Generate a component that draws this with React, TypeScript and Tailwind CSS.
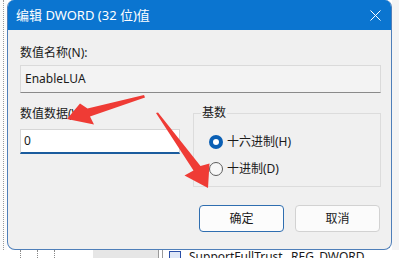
import React from 'react'

const FONT = { fontFamily: '"Noto Sans", "Noto Sans CJK SC", sans-serif' }

function CloseIcon() {
  return (
    <svg width="11" height="11" viewBox="0 0 11 11" className="block">
      <path d="M0.5 0.5 L10.5 10.5 M10.5 0.5 L0.5 10.5" stroke="#ffffff" strokeWidth="1" fill="none" />
    </svg>
  )
}

function Radio({ checked, label }: { checked?: boolean; label: string }) {
  return (
    <div className="flex items-center gap-[4px] h-[16px]">
      {checked ? (
        <span className="flex h-[14px] w-[14px] items-center justify-center rounded-full bg-[#0a5fb4]">
          <span className="h-[6px] w-[6px] rounded-full bg-white" />
        </span>
      ) : (
        <span className="h-[14px] w-[14px] rounded-full border border-[#5c5c5c] bg-[#f7f7f7]" />
      )}
      <span className="text-[12px] leading-[16px] text-[#1a1a1a]">{label}</span>
    </div>
  )
}

function Arrows() {
  return (
    <svg
      width="399"
      height="258"
      viewBox="0 0 399 258"
      className="pointer-events-none absolute left-0 top-0"
    >
      <polygon
        points="144,95 145,97.5 90,116.5 94,124.5 67,119 80,103.5 87.5,108.5"
        fill="#ef3b35"
      />
      <polygon
        points="156,113 158,112.5 200.5,166 209.5,163.5 208,188 184.5,175.5 193.5,170.5"
        fill="#ef3b35"
      />
    </svg>
  )
}

export default function App() {
  return (
    <div className="relative h-[258px] w-[399px] overflow-hidden bg-white text-[#1a1a1a]" style={FONT}>
      <div className="flex h-[250px]">
        {/* left sliver of the registry tree */}
        <div className="flex w-[7px] bg-[#fbfbfb] pl-[3px]">
          <div className="h-full border-l border-dotted border-[#9a9a9a]" />
        </div>

        {/* dialog */}
        <div className="flex w-[385px] flex-col overflow-hidden rounded-t-[7px] rounded-b-[8px] border-x border-b border-[#4f7fb9] bg-[#f0f0f0]">
          <div className="flex h-[30px] shrink-0 items-center justify-between bg-[#0b75d0] pl-[8px] pr-[10px]">
            <span className="text-[13px] leading-[16px] text-white">编辑 DWORD (32 位)值</span>
            <CloseIcon />
          </div>

          <div className="flex flex-1 flex-col pl-[12px] pr-[10px] pt-[15px]">
            <div className="text-[12px] leading-[16px]">数值名称(N):</div>
            <div className="mt-[4px] flex h-[28px] items-center border border-[#dadada] border-b-[#8a8a8a] bg-[#f3f3f3] px-[4px] text-[12px]">
              EnableLUA
            </div>

            <div className="mt-[13px] flex">
              <div className="flex w-[160px] flex-col">
                <div className="text-[12px] leading-[16px]">数值数据(V):</div>
                <div className="mt-[7px] flex h-[25px] items-center border border-[#d6d6d6] border-b-2 border-b-[#1b5c9e] bg-white px-[3px] text-[12px]">
                  0
                </div>
              </div>

              <div className="relative ml-[13px] mt-[7px] flex h-[74px] w-[188px] flex-col gap-[11px] border border-[#dcdcdc] pl-[15px] pt-[20px]">
                <span className="absolute left-[7px] top-[-9px] bg-[#f0f0f0] px-[1px] text-[12px] leading-[16px]">
                  基数
                </span>
                <Radio checked label="十六进制(H)" />
                <Radio label="十进制(D)" />
              </div>
            </div>

            <div className="mt-[18px] flex justify-end gap-[11px] pr-[1px]">
              <button className="h-[27px] w-[85px] rounded-[4px] border border-[#2f6eb0] bg-[#fcfcfc] text-[12px]">
                确定
              </button>
              <button className="h-[27px] w-[85px] rounded-[4px] border border-[#d2d2d2] bg-[#fbfbfb] text-[12px]">
                取消
              </button>
            </div>
          </div>
        </div>

        <div className="w-[7px] bg-[#f4f4f4]" />
      </div>

      {/* bottom sliver of the registry window */}
      <div className="flex h-[8px] overflow-hidden bg-white">
        <div className="flex w-[93px] gap-[16px] pl-[20px]">
          <div className="h-full border-l border-dotted border-[#8a8a8a]" />
          <div className="h-full border-l border-dotted border-[#8a8a8a]" />
          <div className="h-full border-l border-dotted border-[#8a8a8a]" />
        </div>
        <div className="w-[65px] bg-[#e6e6e6]" />
        <div className="w-[5px] border-x border-[#9a9a9a] bg-white" />
        <div className="mt-[-1px] flex items-start pl-[6px]">
          <span className="mr-[8px] mt-[2px] h-[10px] w-[12px] border border-[#2a4fa8] bg-[#dfe7f7]" />
          <span className="w-[102px] text-[12px] leading-[16px]">SupportFullTrust</span>
          <span className="text-[12px] leading-[16px]">REG_DWORD</span>
        </div>
      </div>

      <Arrows />
    </div>
  )
}
